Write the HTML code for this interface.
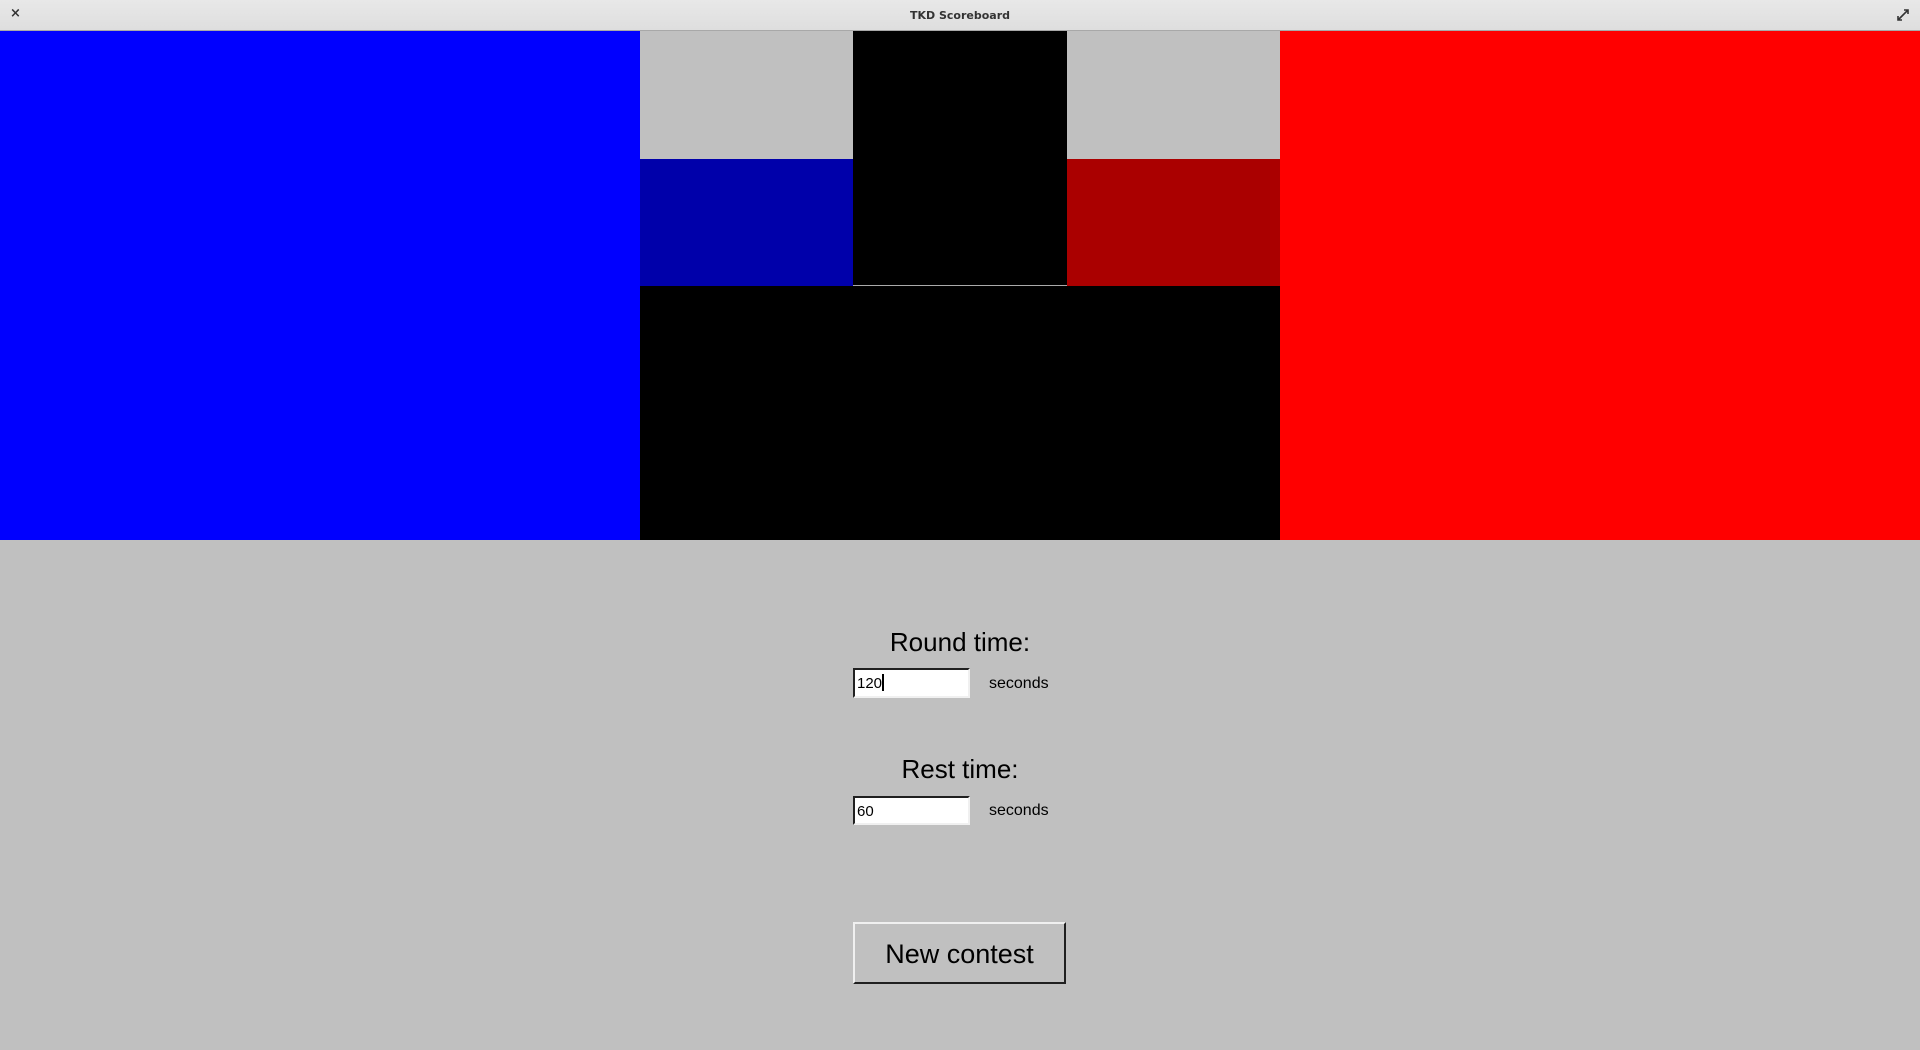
<!DOCTYPE html>
<html><head><meta charset="utf-8"><style>
*{margin:0;padding:0;box-sizing:border-box}
body{width:1920px;height:1050px;background:#c0c0c0;position:relative;overflow:hidden;font-family:"Liberation Sans",sans-serif}
.a{position:absolute}
.title{left:0;top:0;width:1920px;height:31px;background:linear-gradient(#e8e8e8,#dedede);border-bottom:1px solid #a8a8a8;text-align:center;font:bold 11px "DejaVu Sans","Liberation Sans",sans-serif;color:#333;line-height:31px}
.inp{background:#fff;border-top:2px solid #202020;border-left:2px solid #202020;border-bottom:2px solid #f0f0f0;border-right:2px solid #f0f0f0;font-size:15px;padding-left:2px;line-height:27px;color:#000}
.lbl{font-size:26px;color:#000;text-align:center;width:400px;left:760px}
.sec{font-size:16px;left:989px}
</style></head><body>
<div class="a title">TKD Scoreboard</div>
<div class="a" style="left:10px;top:6px;font:bold 13px 'DejaVu Sans',sans-serif;color:#333">×</div>
<svg class="a" style="left:1896px;top:8px" width="14" height="14" viewBox="0 0 14 14"><path d="M8 2h4v4M12 2L7 7M6 12H2V8M2 12l5-5" stroke="#333" stroke-width="1.6" fill="none"/></svg>
<div class="a" style="left:0;top:31px;width:640px;height:509px;background:#0000ff"></div>
<div class="a" style="left:640px;top:31px;width:213px;height:128px;background:#c0c0c0"></div>
<div class="a" style="left:640px;top:159px;width:213px;height:127px;background:#0000aa"></div>
<div class="a" style="left:853px;top:31px;width:214px;height:255px;background:#000"></div>
<div class="a" style="left:853px;top:285px;width:214px;height:1px;background:#aaa"></div>
<div class="a" style="left:1067px;top:31px;width:213px;height:128px;background:#c0c0c0"></div>
<div class="a" style="left:1067px;top:159px;width:213px;height:127px;background:#aa0000"></div>
<div class="a" style="left:640px;top:286px;width:640px;height:254px;background:#000"></div>
<div class="a" style="left:1280px;top:31px;width:640px;height:509px;background:#ff0000"></div>
<div class="a lbl" style="top:627px">Round time:</div>
<div class="a inp" style="left:853px;top:668px;width:117px;height:30px">120<span style="display:inline-block;width:2px;height:17px;background:#000;vertical-align:-3px"></span></div>
<div class="a sec" style="top:675px">seconds</div>
<div class="a lbl" style="top:754px">Rest time:</div>
<div class="a inp" style="left:853px;top:796px;width:117px;height:29px">60</div>
<div class="a sec" style="top:802px">seconds</div>
<div class="a" style="left:853px;top:922px;width:213px;height:62px;border-top:2px solid #f0f0f0;border-left:2px solid #f0f0f0;border-bottom:2px solid #202020;border-right:2px solid #202020;font-size:27px;text-align:center;line-height:60px">New contest</div>
</body></html>
